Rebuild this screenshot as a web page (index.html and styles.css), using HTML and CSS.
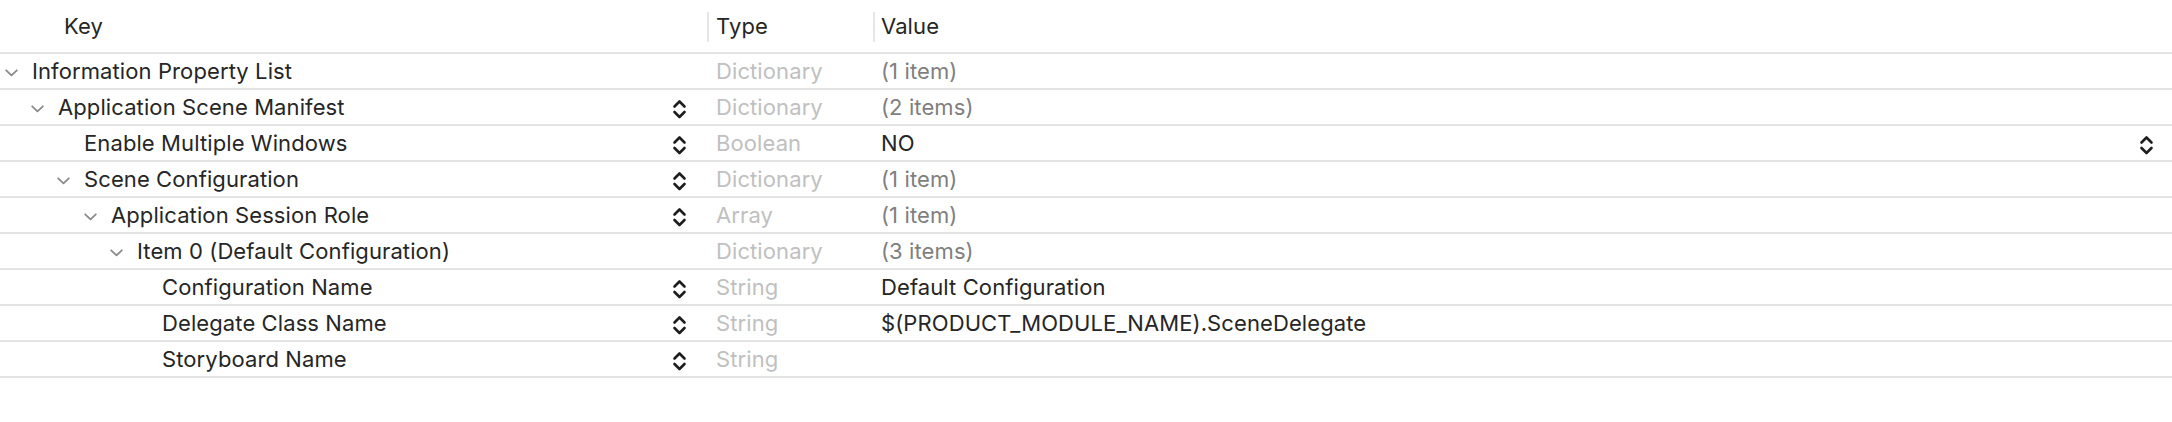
FILE: index.html
```html
<!DOCTYPE html>
<html>
<head>
<meta charset="utf-8">
<link rel="stylesheet" href="styles.css">
</head>
<body>
<div class="plist">
  <div class="header">
    <div class="hcell hkey">Key</div>
    <div class="hcell htype"><span class="hdiv"></span>Type</div>
    <div class="hcell hval"><span class="hdiv"></span>Value</div>
  </div>

  <div class="row">
    <div class="key l0"><span class="disc"><svg width="13" height="8" viewBox="0 0 13 8"><path d="M1.2 1.3 L6.5 6.4 L11.8 1.3"/></svg></span><span class="name">Information Property List</span></div>
    <div class="type">Dictionary</div>
    <div class="val summary">(1 item)</div>
  </div>

  <div class="row">
    <div class="key l1"><span class="disc"><svg width="13" height="8" viewBox="0 0 13 8"><path d="M1.2 1.3 L6.5 6.4 L11.8 1.3"/></svg></span><span class="name">Application Scene Manifest</span><span class="stepper"><svg width="15" height="22" viewBox="0 0 15 22"><path d="M2.5 8.5 L7.5 3.5 L12.5 8.5 M2.5 14 L7.5 19 L12.5 14"/></svg></span></div>
    <div class="type">Dictionary</div>
    <div class="val summary">(2 items)</div>
  </div>

  <div class="row">
    <div class="key l2"><span class="disc"></span><span class="name">Enable Multiple Windows</span><span class="stepper"><svg width="15" height="22" viewBox="0 0 15 22"><path d="M2.5 8.5 L7.5 3.5 L12.5 8.5 M2.5 14 L7.5 19 L12.5 14"/></svg></span></div>
    <div class="type">Boolean</div>
    <div class="val"><span class="vtext">NO</span><span class="stepper vstep"><svg width="15" height="22" viewBox="0 0 15 22"><path d="M2.5 8.5 L7.5 3.5 L12.5 8.5 M2.5 14 L7.5 19 L12.5 14"/></svg></span></div>
  </div>

  <div class="row">
    <div class="key l2"><span class="disc"><svg width="13" height="8" viewBox="0 0 13 8"><path d="M1.2 1.3 L6.5 6.4 L11.8 1.3"/></svg></span><span class="name">Scene Configuration</span><span class="stepper"><svg width="15" height="22" viewBox="0 0 15 22"><path d="M2.5 8.5 L7.5 3.5 L12.5 8.5 M2.5 14 L7.5 19 L12.5 14"/></svg></span></div>
    <div class="type">Dictionary</div>
    <div class="val summary">(1 item)</div>
  </div>

  <div class="row">
    <div class="key l3"><span class="disc"><svg width="13" height="8" viewBox="0 0 13 8"><path d="M1.2 1.3 L6.5 6.4 L11.8 1.3"/></svg></span><span class="name">Application Session Role</span><span class="stepper"><svg width="15" height="22" viewBox="0 0 15 22"><path d="M2.5 8.5 L7.5 3.5 L12.5 8.5 M2.5 14 L7.5 19 L12.5 14"/></svg></span></div>
    <div class="type">Array</div>
    <div class="val summary">(1 item)</div>
  </div>

  <div class="row">
    <div class="key l4"><span class="disc"><svg width="13" height="8" viewBox="0 0 13 8"><path d="M1.2 1.3 L6.5 6.4 L11.8 1.3"/></svg></span><span class="name">Item 0 (Default Configuration)</span></div>
    <div class="type">Dictionary</div>
    <div class="val summary">(3 items)</div>
  </div>

  <div class="row">
    <div class="key l5"><span class="disc"></span><span class="name">Configuration Name</span><span class="stepper"><svg width="15" height="22" viewBox="0 0 15 22"><path d="M2.5 8.5 L7.5 3.5 L12.5 8.5 M2.5 14 L7.5 19 L12.5 14"/></svg></span></div>
    <div class="type">String</div>
    <div class="val">Default Configuration</div>
  </div>

  <div class="row">
    <div class="key l5"><span class="disc"></span><span class="name">Delegate Class Name</span><span class="stepper"><svg width="15" height="22" viewBox="0 0 15 22"><path d="M2.5 8.5 L7.5 3.5 L12.5 8.5 M2.5 14 L7.5 19 L12.5 14"/></svg></span></div>
    <div class="type">String</div>
    <div class="val">$(PRODUCT_MODULE_NAME).SceneDelegate</div>
  </div>

  <div class="row">
    <div class="key l5"><span class="disc"></span><span class="name">Storyboard Name</span><span class="stepper"><svg width="15" height="22" viewBox="0 0 15 22"><path d="M2.5 8.5 L7.5 3.5 L12.5 8.5 M2.5 14 L7.5 19 L12.5 14"/></svg></span></div>
    <div class="type">String</div>
    <div class="val"></div>
  </div>
</div>
</body>
</html>
```

FILE: styles.css
```css
html, body {
  margin: 0;
  padding: 0;
  background: #ffffff;
}

body {
  font-family: Inter, "Noto Sans", "Liberation Sans", sans-serif;
  font-size: 22px;
  letter-spacing: 0.1px;
  color: #262626;
  -webkit-font-smoothing: antialiased;
}

.plist {
  width: 2172px;
}

.header,
.row {
  display: grid;
  grid-template-columns: 707px 166px 1fr;
  align-items: center;
}

.header {
  height: 52px;
  border-bottom: 2px solid #e3e3e3;
}

.row {
  height: 34px;
  border-bottom: 2px solid #e3e3e3;
}

.hcell {
  display: flex;
  align-items: center;
  height: 100%;
  position: relative;
}

.hkey {
  padding-left: 64px;
}

.htype {
  padding-left: 9px;
}

.hval {
  padding-left: 8px;
}

.hdiv {
  position: absolute;
  left: 0;
  top: 12px;
  bottom: 10px;
  width: 2px;
  background: #e6e6e6;
}

.key {
  display: flex;
  align-items: center;
  height: 100%;
  padding-right: 20px;
}

.l0 { padding-left: 5px; }
.l1 { padding-left: 31px; }
.l2 { padding-left: 57px; }
.l3 { padding-left: 84px; }
.l4 { padding-left: 110px; }
.l5 { padding-left: 135px; }

.disc {
  width: 27px;
  flex: none;
  display: flex;
  align-items: center;
  padding-top: 4px;
}

.disc svg path {
  fill: none;
  stroke: #8a8a8a;
  stroke-width: 1.8;
  stroke-linecap: round;
  stroke-linejoin: round;
}

.name {
  white-space: nowrap;
}

.stepper {
  margin-left: auto;
  display: flex;
  align-items: center;
  padding-top: 4px;
}

.stepper svg path {
  fill: none;
  stroke: #1e1e1e;
  stroke-width: 2.6;
  stroke-linecap: round;
  stroke-linejoin: round;
}

.type {
  padding-left: 9px;
  color: #c0c0c0;
}

.val {
  display: flex;
  align-items: center;
  height: 100%;
  padding-left: 8px;
  padding-right: 18px;
  color: #262626;
}

.val.summary {
  color: #7f7f7f;
}

.vstep {
  margin-left: auto;
}
```
